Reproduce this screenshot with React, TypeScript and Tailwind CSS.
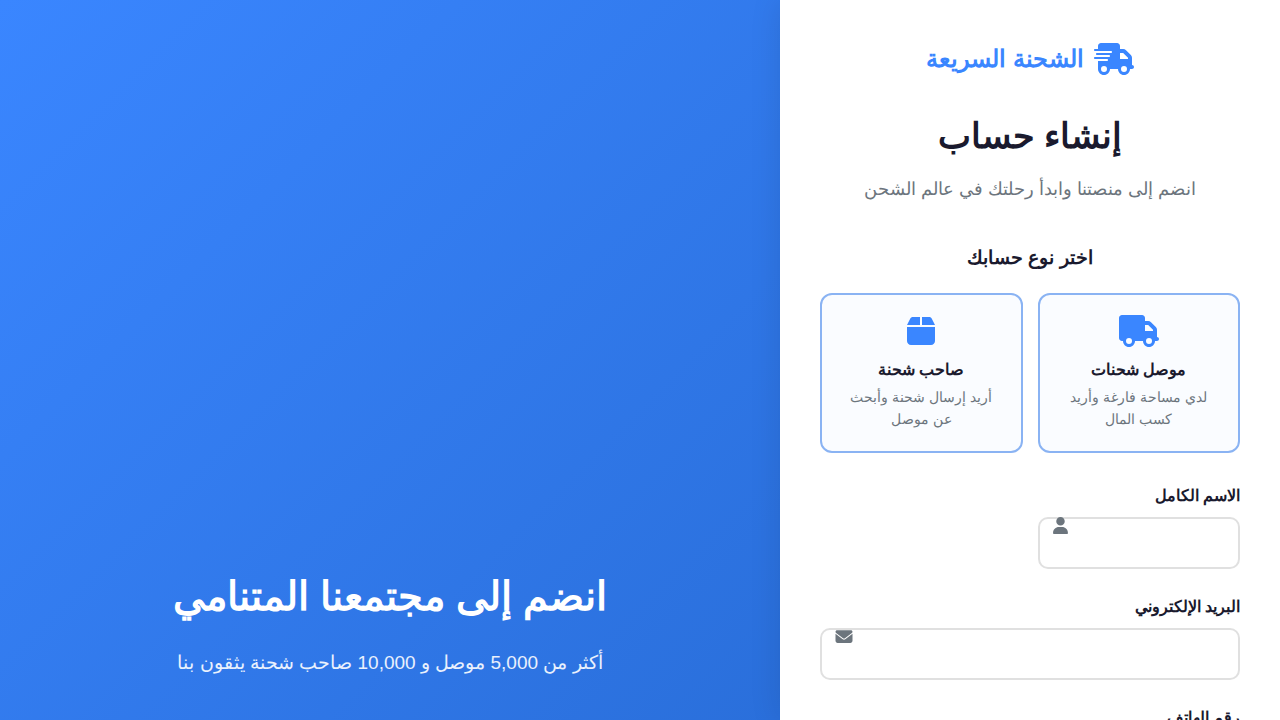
import type { ComponentType } from "react";
import { FaBox, FaEnvelope, FaPhone, FaTruck, FaTruckFast, FaUser } from "react-icons/fa6";

type Icon = ComponentType<{ className?: string }>;

function AccountOption({ icon: IconTag, title, text, value }: { icon: Icon; title: string; text: string; value: string }) {
  return (
    <label className="block cursor-pointer rounded-xl border-2 border-[#8ab3f3] bg-[#fafcff] px-5 pt-5 pb-[21px] text-center">
      <input type="radio" name="account" value={value} className="sr-only" />
      <IconTag className="mx-auto mb-2.5 block h-8 w-10 text-[#3a86ff]" />
      <span className="mb-[3px] block text-base/[26px] font-bold">{title}</span>
      <span className="block text-sm/[22px] text-[#6c757d]">{text}</span>
    </label>
  );
}

function Field({ id, label, type, icon: IconTag, half }: { id: string; label: string; type: string; icon: Icon; half?: boolean }) {
  return (
    <div className={half ? "" : "col-span-2"}>
      <label htmlFor={id} className="mb-2 block text-base/[26px] font-bold">
        {label}
      </label>
      <div className="relative">
        <input id={id} type={type} className="block h-[52px] w-full rounded-[10px] border-2 border-[#e0e0e0] bg-white pr-4 pl-11 text-base outline-none focus:border-[#3a86ff]" />
        <span className="pointer-events-none absolute top-0 left-[15px] text-[#6c757d]">
          <IconTag className={half ? "h-[17px] w-[15px]" : "h-[17px] w-[18px]"} />
        </span>
      </div>
    </div>
  );
}

export default function App() {
  return (
    <div dir="rtl" className="flex h-screen overflow-hidden bg-white font-['Liberation_Sans',sans-serif] text-[#1a1a2e]">
      <main className="relative z-10 w-full max-w-[500px] shrink-0 overflow-y-auto bg-white p-10 shadow-[0_0_30px_rgba(0,0,0,0.1)] [scrollbar-width:none]">
        <a href="#" className="mb-[30px] flex items-center justify-center gap-2.5 text-[#3a86ff]">
          <FaTruckFast className="h-8 w-10" />
          <span className="text-2xl/[38px] font-bold">الشحنة السريعة</span>
        </a>
        <header className="mb-[38px] text-center">
          <h1 className="mb-2.5 text-[35px]/[56px] font-bold">إنشاء حساب</h1>
          <p className="text-lg/[31px] text-[#6c757d]">انضم إلى منصتنا وابدأ رحلتك في عالم الشحن</p>
        </header>
        <form>
          <fieldset className="mb-[30px]">
            <legend className="mb-5 w-full text-center text-[19px]/[30px] font-bold">اختر نوع حسابك</legend>
            <div className="grid grid-cols-2 gap-[15px]">
              <AccountOption icon={FaTruck} title="موصل شحنات" text="لدي مساحة فارغة وأريد كسب المال" value="carrier" />
              <AccountOption icon={FaBox} title="صاحب شحنة" text="أريد إرسال شحنة وأبحث عن موصل" value="shipper" />
            </div>
          </fieldset>
          <div className="grid grid-cols-2 gap-x-[15px] gap-y-[25px]">
            <Field id="name" label="الاسم الكامل" type="text" icon={FaUser} half />
            <Field id="email" label="البريد الإلكتروني" type="email" icon={FaEnvelope} />
            <Field id="phone" label="رقم الهاتف" type="tel" icon={FaPhone} />
          </div>
        </form>
      </main>
      <section className="flex flex-1 flex-col justify-end bg-[linear-gradient(135deg,#3a86ff,#2a6fdb)] p-10 text-center text-white">
        <h2 className="mb-[18px] text-[40px]/[64px] font-bold">انضم إلى مجتمعنا المتنامي</h2>
        <p className="text-[19px]/[34px] text-white/90">أكثر من 5,000 موصل و 10,000 صاحب شحنة يثقون بنا</p>
      </section>
    </div>
  );
}
